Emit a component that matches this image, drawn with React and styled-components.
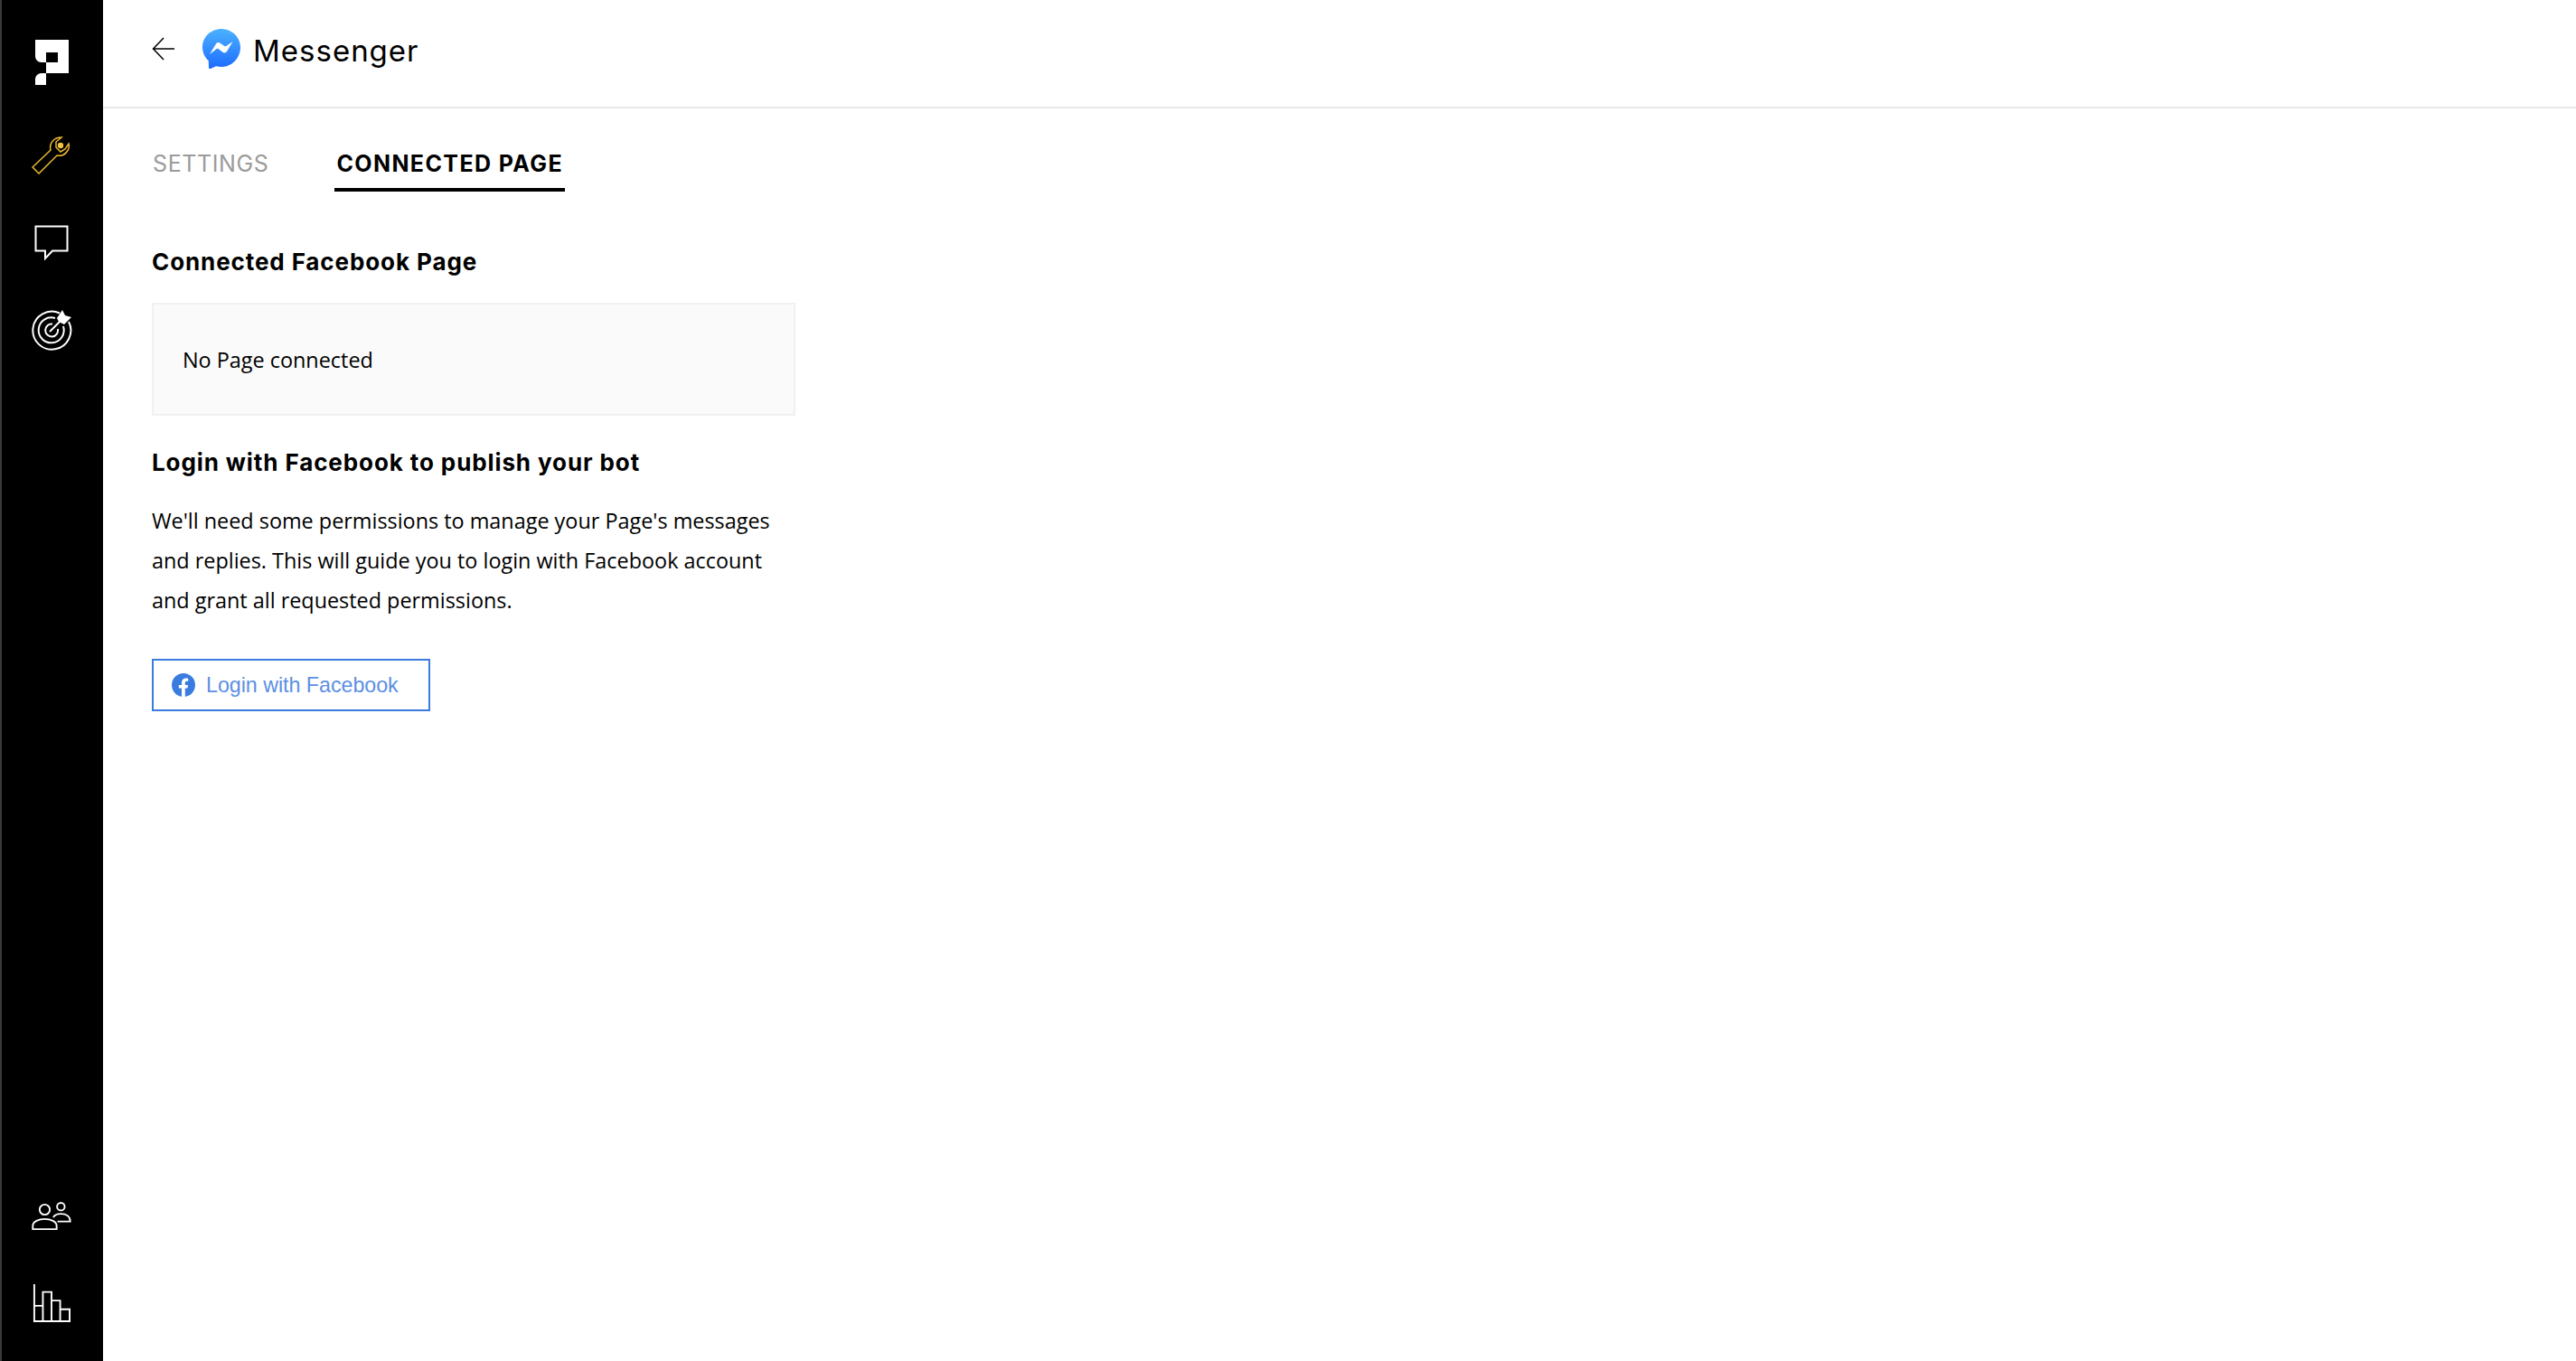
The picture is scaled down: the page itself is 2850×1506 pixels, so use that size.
import React from "react";
import styled, { createGlobalStyle } from "styled-components";

const GlobalStyle = createGlobalStyle`
  html, body { margin: 0; padding: 0; background: #fff; }
  #root { height: 100vh; }
  * { box-sizing: border-box; }
`;

const Page = styled.div`
  display: flex;
  height: 1506px;
  background: #fff;
  color: #000;
`;

const Sidebar = styled.nav`
  width: 114px;
  flex-shrink: 0;
  display: flex;
  flex-direction: column;
  justify-content: space-between;
  background: #000;
  border-left: 2px solid #3a3a3a;
  padding-top: 20px;
  padding-right: 2px;
  padding-bottom: 16px;
`;

const SideGroup = styled.div`
  display: flex;
  flex-direction: column;
`;

const SideSlot = styled.div`
  height: ${props => props.$height || 96}px;
  margin-bottom: ${props => props.$gap || 0}px;
  display: flex;
  align-items: center;
  justify-content: center;
`;

const Main = styled.main`
  flex: 1;
  min-width: 0;
`;

const Header = styled.header`
  height: 120px;
  display: flex;
  align-items: center;
  padding: 0 0 10px 54px;
  border-bottom: 2px solid #e8e8e8;
`;

const BackButton = styled.button`
  display: flex;
  padding: 0;
  margin-right: 30px;
  border: 0;
  background: none;
`;

const Title = styled.h1`
  margin: 4px 0 0 14px;
  font-family: Inter, sans-serif;
  font-size: 33px;
  font-weight: 400;
  letter-spacing: 1px;
`;

const Tabs = styled.div`
  display: flex;
  gap: 71px;
  height: 92px;
  padding: 46px 0 0 53px;
`;

const Tab = styled.div`
  height: 46px;
  padding: 0 2px;
  font-family: Inter, sans-serif;
  font-size: 25px;
  line-height: 30px;
  white-space: nowrap;
  font-weight: ${props => (props.$active ? 700 : 400)};
  letter-spacing: ${props => (props.$active ? 1.4 : 0.6)}px;
  color: ${props => (props.$active ? "#000" : "#9b9b9b")};
  border-bottom: ${props => (props.$active ? "4px solid #000" : "none")};
`;

const Content = styled.section`
  width: 712px;
  margin-left: 54px;
  padding-top: 62px;
`;

const Heading = styled.h2`
  margin: 0;
  font-family: Inter, sans-serif;
  font-size: 26px;
  line-height: 32px;
  font-weight: 700;
  letter-spacing: 0.9px;
`;

const EmptyBox = styled.div`
  height: 125px;
  margin: 29px 0 36px;
  padding-left: 32px;
  display: flex;
  align-items: center;
  background: #fafafa;
  border: 2px solid #f0f0f0;
  font-family: "Open Sans", sans-serif;
  font-size: 23.4px;
`;

const Text = styled.p`
  margin: 26px 0 43px;
  font-family: "Open Sans", sans-serif;
  font-size: 23.4px;
  line-height: 44px;
`;

const FacebookButton = styled.button`
  width: 308px;
  height: 58px;
  display: flex;
  align-items: center;
  gap: 12px;
  padding: 0 0 0 20px;
  background: #fff;
  border: 2px solid #3a7bdf;
  color: #5b8fe3;
  font-family: "Liberation Sans", Arial, sans-serif;
  font-size: 23.2px;
`;

const Logo = () => (
  <svg width="37" height="50" viewBox="0 0 37 50">
    <path
      fill="#fff"
      fillRule="evenodd"
      d="M0 0H37V37H12V25H7C3 25 0 22 0 18ZM12 14V25H25V14ZM12 37V50H0V44C0 40 3 37 7 37Z"
    />
  </svg>
);

const WrenchIcon = () => (
  <svg width="44" height="42" viewBox="0 0 44 42" fill="none" stroke="#e9b92f" strokeWidth="1.5">
    <path d="M1 34L21 15C19 7 25 1 33 1L27 6V12L32 17L37 14L41 8C43 15 36 23 28 21L8 41Z" />
    <circle cx="32" cy="10" r="3.2" fill="#f2c53d" stroke="none" />
  </svg>
);

const ChatIcon = () => (
  <svg width="38" height="40" viewBox="0 0 38 40" fill="none" stroke="#fff" strokeWidth="2">
    <path d="M1.500 1.500H36.500V28.500H20L12 37V28.500H1.500Z" />
  </svg>
);

const TargetIcon = () => (
  <svg width="46" height="46" viewBox="0 0 46 46" fill="none" stroke="#fff" strokeWidth="2">
    <path d="M32 4.500A21 21 0 1 0 42 14" />
    <path d="M27 10A14 14 0 1 0 36 19" />
    <path d="M24 16.500A7 7 0 1 0 30 22" />
    <path d="M21 25L33 13" />
    <path d="M29 10L35 1L38 7L45 9L37 17L31 14Z" fill="#fff" stroke="none" />
  </svg>
);

const PeopleIcon = () => (
  <svg width="44" height="32" viewBox="0 0 46 34" fill="none" stroke="#fff" strokeWidth="2">
    <circle cx="15" cy="9" r="6" />
    <circle cx="34" cy="5.500" r="4.500" />
    <path d="M1 32V28C1 23 8 20 15 20C22 20 29 23 29 28V32Z" />
    <path d="M25 18C27 15 30 14 34 14C40 14 45 17 45 23H30" />
  </svg>
);

const ChartIcon = () => (
  <svg width="42" height="44" viewBox="0 0 44 44" fill="none" stroke="#fff" strokeWidth="2">
    <path d="M2 0V43H43V29H32V19H22V9H12V43M2 25H12M22 19V43M32 29V43" />
  </svg>
);

const BackIcon = () => (
  <svg width="26" height="26" viewBox="0 0 26 26" fill="none" stroke="#000" strokeWidth="1.5">
    <path d="M25 13H2M13 1L1.500 13L13 25" />
  </svg>
);

const MessengerIcon = () => (
  <svg width="42" height="44" viewBox="0 0 42 44">
    <defs>
      <linearGradient id="messengerBlue" x1="0" y1="0" x2="0" y2="1">
        <stop offset="0" stopColor="#4cb2ff" />
        <stop offset="1" stopColor="#1d6bff" />
      </linearGradient>
    </defs>
    <path
      fill="url(#messengerBlue)"
      d="M21 0C9.300 0 0 8.800 0 20.200C0 26.200 2.500 31.400 6.700 35L7 43C7 44 8 44.400 9 44L15 41.300C17 41.800 19 42 21 42C32.700 42 42 32 42 20.500C42 9 32.700 0 21 0Z"
    />
    <path
      fill="#fff"
      d="M8 28L15 16.500C16 15 18 14.500 19.500 15.700L24.500 19C25 19.400 25.700 19.400 26.200 19L33.500 14L27 25C26 26.500 24 26.900 22.500 25.800L17.500 22C17 21.600 16.300 21.600 15.800 22Z"
    />
  </svg>
);

const FacebookIcon = () => (
  <svg width="26" height="26" viewBox="0 0 26 26">
    <circle cx="13" cy="13" r="13" fill="#3a7bdf" />
    <path
      fill="#fff"
      d="M11 26V16.500H7.800V13H11V10.300C11 7.200 12.900 5.500 15.700 5.500C17 5.500 18.200 5.700 18.200 5.700V8.700H16.700C15.200 8.700 14.800 9.600 14.800 10.500V13H18L17.500 16.500H14.800V26Z"
    />
  </svg>
);

const App = () => {
  return (
    <Page>
      <GlobalStyle />
      <Sidebar>
        <SideGroup>
          <SideSlot $height={98} $gap={6}>
            <Logo />
          </SideSlot>
          <SideSlot>
            <WrenchIcon />
          </SideSlot>
          <SideSlot $height={98}>
            <ChatIcon />
          </SideSlot>
          <SideSlot $height={94}>
            <TargetIcon />
          </SideSlot>
        </SideGroup>
        <SideGroup>
          <SideSlot>
            <PeopleIcon />
          </SideSlot>
          <SideSlot>
            <ChartIcon />
          </SideSlot>
        </SideGroup>
      </Sidebar>
      <Main>
        <Header>
          <BackButton>
            <BackIcon />
          </BackButton>
          <MessengerIcon />
          <Title>Messenger</Title>
        </Header>
        <Tabs>
          <Tab>SETTINGS</Tab>
          <Tab $active>CONNECTED PAGE</Tab>
        </Tabs>
        <Content>
          <Heading>Connected Facebook Page</Heading>
          <EmptyBox>No Page connected</EmptyBox>
          <Heading>Login with Facebook to publish your bot</Heading>
          <Text>
            We'll need some permissions to manage your Page's messages and replies. This will guide
            you to login with Facebook account and grant all requested permissions.
          </Text>
          <FacebookButton>
            <FacebookIcon />
            Login with Facebook
          </FacebookButton>
        </Content>
      </Main>
    </Page>
  );
};

export default App;
